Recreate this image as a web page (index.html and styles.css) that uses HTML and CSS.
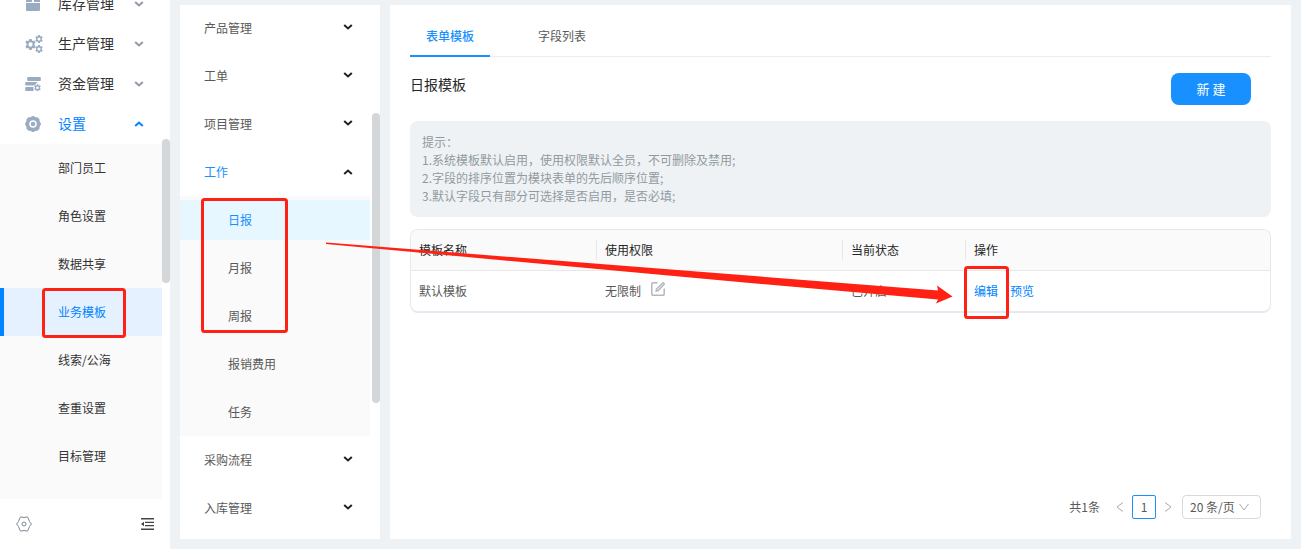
FILE: index.html
```html
<!DOCTYPE html>
<html lang="zh-CN">
<head>
<meta charset="utf-8">
<title>业务模板</title>
<link rel="stylesheet" href="styles.css">
</head>
<body>
<svg class="defs" width="0" height="0" aria-hidden="true">
  <symbol id="chev" viewBox="0 0 10 6"><path d="M1.200 1 L5 4.500 L8.800 1" fill="none" stroke="currentColor" stroke-width="2"/></symbol>
  <symbol id="gear" viewBox="0 0 16 16"><path fill="currentColor" fill-rule="evenodd" d="M6.3 0h3.4l.5 2.2 1.3.8 2.2-.7 1.7 2.9-1.7 1.6v2.4l1.7 1.6-1.7 2.9-2.2-.7-1.3.8-.5 2.2H6.3l-.5-2.2-1.3-.8-2.2.7-1.7-2.9 1.7-1.6V6.8L.6 5.200l1.700-2.900 2.200.7 1.300-.8zM8 4.900a3.100 3.100 0 1 0 0 6.200 3.100 3.100 0 0 0 0-6.200z"/></symbol>
</svg>
<div class="app">
  <aside class="sidebar">
    <nav class="side-nav">
      <button class="side-item">
        <svg class="side-icon" viewBox="0 0 16 16"><path fill="currentColor" d="M1 2h6v4H1zM9 2h6v4H9zM1 7h14v7a1 1 0 0 1-1 1H2a1 1 0 0 1-1-1z"/></svg>
        <span>库存管理</span><svg class="chev"><use href="#chev"/></svg>
      </button>
      <button class="side-item">
        <svg class="side-icon wide" viewBox="0 0 18 18"><use href="#gear" x="0" y="4" width="11" height="11"/><use href="#gear" x="10" y="0" width="8" height="8"/><use href="#gear" x="10" y="10" width="8" height="8"/></svg>
        <span>生产管理</span><svg class="chev"><use href="#chev"/></svg>
      </button>
      <button class="side-item">
        <svg class="side-icon" viewBox="0 0 16 16"><path fill="currentColor" d="M3 1h12a.8.8 0 0 1 .8.8v2.400a.8.8 0 0 1-.8.8H3a.8.8 0 0 1-.8-.8V1.800A.8.8 0 0 1 3 1zM1 6h11.500L9.500 9.500H1a.8.8 0 0 1-.8-.8V6.800A.8.8 0 0 1 1 6zM1 11h7.500v4H1a.8.8 0 0 1-.8-.8v-2.400A.8.8 0 0 1 1 11z"/><use href="#gear" x="9" y="8" width="7" height="7.500"/></svg>
        <span>资金管理</span><svg class="chev"><use href="#chev"/></svg>
      </button>
      <button class="side-item open">
        <svg class="side-icon" viewBox="0 0 16 16"><path fill="currentColor" stroke="currentColor" stroke-width="1.600" stroke-linejoin="round" d="M6 1.800 8 .8l2 1 2.200.3 1.500 1.500.2 2L15.200 8l-1.300 2.400-.2 2-1.500 1.500-2.200.3-2 1-2-1-2.200-.3-1.500-1.500-.2-2L.8 8l1.300-2.400.2-2 1.500-1.500z"/><circle cx="8" cy="8" r="3" fill="none" stroke="#fff" stroke-width="1.500"/></svg>
        <span>设置</span><svg class="chev up"><use href="#chev"/></svg>
      </button>
      <div class="side-sub">
        <a href="#">部门员工</a>
        <a href="#">角色设置</a>
        <a href="#">数据共享</a>
        <a href="#" class="active">业务模板</a>
        <a href="#">线索/公海</a>
        <a href="#">查重设置</a>
        <a href="#">目标管理</a>
      </div>
    </nav>
    <div class="side-foot">
      <button class="icon-btn" aria-label="系统设置"><svg width="16" height="16" viewBox="0 0 16 16" fill="none" stroke="#7d8a96"><path d="M4.600.8 Q8 2.200 11.400.8 L12.600 3 Q12.800 5.500 15.500 8 Q12.800 10.500 12.600 13 L11.400 15.200 Q8 13.800 4.600 15.200 L3.400 13 Q3.200 10.500.5 8 Q3.200 5.500 3.400 3 Z" stroke-linejoin="round"/><circle cx="8" cy="8" r="2"/></svg></button>
      <button class="icon-btn" aria-label="收起菜单"><svg width="14" height="12" viewBox="0 0 14 12"><path d="M1 0h13v1.500H1zM5 3.700h9V5H5zM5 7h9v1.300H5zM1 10.500h13V12H1zM4 3.800v4.400L1 6z" fill="#444"/></svg></button>
    </div>
    <div class="thumb side-thumb"></div>
  </aside>

  <section class="modules">
    <nav class="mod-nav">
      <button class="mod-item"><span>产品管理</span><svg class="chev"><use href="#chev"/></svg></button>
      <button class="mod-item"><span>工单</span><svg class="chev"><use href="#chev"/></svg></button>
      <button class="mod-item"><span>项目管理</span><svg class="chev"><use href="#chev"/></svg></button>
      <button class="mod-item open"><span>工作</span><svg class="chev up"><use href="#chev"/></svg></button>
      <div class="mod-sub">
        <a href="#" class="active">日报</a>
        <a href="#">月报</a>
        <a href="#">周报</a>
        <a href="#">报销费用</a>
        <a href="#">任务</a>
      </div>
      <button class="mod-item"><span>采购流程</span><svg class="chev"><use href="#chev"/></svg></button>
      <button class="mod-item"><span>入库管理</span><svg class="chev"><use href="#chev"/></svg></button>
    </nav>
    <div class="thumb mod-thumb"></div>
  </section>

  <main class="content">
    <div class="tabs" role="tablist">
      <button class="tab active" role="tab" aria-selected="true">表单模板</button>
      <button class="tab" role="tab" aria-selected="false">字段列表</button>
    </div>
    <header class="head">
      <h1>日报模板</h1>
      <button class="primary">新 建</button>
    </header>
    <div class="note">
      <p>提示：</p>
      <p>1.系统模板默认启用，使用权限默认全员，不可删除及禁用;</p>
      <p>2.字段的排序位置为模块表单的先后顺序位置;</p>
      <p>3.默认字段只有部分可选择是否启用，是否必填;</p>
    </div>
    <div class="table-box">
      <table>
        <colgroup><col class="c-name"><col class="c-scope"><col class="c-state"><col></colgroup>
        <thead><tr><th>模板名称</th><th>使用权限</th><th>当前状态</th><th>操作</th></tr></thead>
        <tbody><tr>
          <td>默认模板</td>
          <td><div class="scope">无限制<button class="icon-btn" aria-label="修改权限"><svg width="14" height="14" viewBox="0 0 14 14" fill="none" stroke="#b3b8bf" stroke-width="1.500"><path d="M6.500.8H2a1.200 1.200 0 0 0-1.200 1.200v10A1.200 1.200 0 0 0 2 13.200h10a1.200 1.200 0 0 0 1.200-1.200V6.500M5.200 9l.3-2L12 .8l1.300 1.300L7.200 8.500z"/></svg></button></div></td>
          <td>已开启</td>
          <td><div class="ops"><a href="#">编辑</a><a href="#">预览</a></div></td>
        </tr></tbody>
      </table>
    </div>
    <footer class="pager">
      <span class="total">共1条</span>
      <button class="step" aria-label="上一页"><svg width="8" height="10" viewBox="0 0 8 10"><path d="M7 .5 1 5l6 4.500"/></svg></button>
      <button class="page" aria-current="page">1</button>
      <button class="step" aria-label="下一页"><svg width="8" height="10" viewBox="0 0 8 10"><path d="M1 .5 7 5l-6 4.500"/></svg></button>
      <div class="size">
        <select aria-label="每页条数"><option>20 条/页</option></select>
        <svg width="10" height="8" viewBox="0 0 10 8"><path d="M.5 1 5 7l4.500-6"/></svg>
      </div>
    </footer>
  </main>

  <svg class="marks" width="1301" height="549" viewBox="0 0 1301 549" aria-hidden="true">
    <g fill="none" stroke="#ff2113" stroke-width="3">
      <rect x="43.500" y="289.500" width="81" height="47" rx="2"/>
      <rect x="202.500" y="199.500" width="84" height="132" rx="2"/>
      <rect x="965.500" y="267.500" width="42" height="50" rx="2"/>
    </g>
    <path fill="#ff2113" d="M326 242.500 L938 290.500 L937 285.500 L952.500 296.500 L936 303.500 L938 299.500 L750 283 L326 244 Z"/>
  </svg>
</div>
</body>
</html>
```
FILE: styles.css
```css
* { box-sizing: border-box; }
body, p, h1 { margin: 0; }
body {
  background: #eef2f5;
  color: #595959;
  font: 12px/18px "Noto Sans CJK SC", sans-serif;
}
button, select { font: inherit; color: inherit; }
button { border: 0; padding: 0; background: none; cursor: pointer; }
a { color: inherit; text-decoration: none; }
svg { display: block; }
.defs { position: absolute; }

.app { position: relative; display: flex; height: 100vh; overflow: hidden; }
.chev { width: 10px; height: 6px; }
.chev.up { transform: rotate(180deg); }
.thumb { position: absolute; right: 0; width: 8px; border-radius: 4px; background: #d3d7da; }

/* Primary navigation */
.sidebar {
  position: relative;
  display: flex;
  flex-direction: column;
  flex: none;
  width: 170px;
  background: #fff;
}
.side-nav { flex: 1; display: flex; flex-direction: column; overflow: hidden; justify-content: flex-end; }
.side-item {
  display: flex;
  align-items: center;
  flex: none;
  height: 40px;
  padding: 0 26px 0 25px;
  color: #333;
  font-size: 14px;
  text-align: left;
}
.side-item span { flex: 1; padding: 0 0 2px 17px; }
.side-icon { width: 16px; height: 16px; color: #9aacc1; }
.side-icon.wide { width: 18px; height: 18px; margin-right: -2px; }
.side-item .chev { color: #919ba4; }
.side-item.open span, .side-item.open .chev { color: #0084ff; }
.side-sub { flex: none; width: 162px; padding-bottom: 19px; background: #fafafa; color: #333; }
.side-sub a { display: block; padding-left: 58px; line-height: 48px; }
.side-sub .active { padding-left: 54px; border-left: 4px solid #0084ff; background: #e6f1ff; color: #0084ff; }
.side-foot { display: flex; align-items: center; justify-content: space-between; height: 50px; padding: 0 16px; }
.side-thumb { top: 139px; height: 144px; }

/* Module list */
.modules {
  position: relative;
  flex: none;
  width: 200px;
  margin: 5px 10px 10px;
  background: #fff;
  overflow: hidden;
}
.mod-nav { display: flex; flex-direction: column; margin-top: -1px; }
.mod-item { display: flex; align-items: center; justify-content: space-between; height: 48px; padding: 0 27px 0 24px; }
.mod-item .chev { color: #222; margin-bottom: 3px; }
.mod-item.open .chev { margin-bottom: 0; }
.mod-item.open span { color: #1890ff; }
.mod-sub { display: flex; flex-direction: column; gap: 8px; width: 190px; padding: 4px 0; background: #fafafa; }
.mod-sub a { padding-left: 48px; line-height: 40px; }
.mod-sub .active { background: #e6f7ff; color: #1890ff; }
.mod-thumb { top: 108px; height: 290px; }

/* Content */
.content {
  display: flex;
  flex-direction: column;
  flex: 1;
  margin: 5px 10px 10px 0;
  padding: 0 20px 20px;
  background: #fff;
}
.tabs { display: flex; gap: 32px; padding-top: 12px; border-bottom: 1px solid #eaecee; }
.tab { height: 40px; margin-bottom: -1px; padding: 0 16px; border-bottom: 2px solid transparent; }
.tab.active { border-color: #1890ff; color: #1890ff; font-weight: 500; }
.head { display: flex; align-items: center; justify-content: space-between; padding: 16px 20px 16px 0; }
h1 { padding-bottom: 10px; color: #262626; font-size: 14px; font-weight: 400; }
.primary { width: 80px; height: 32px; border-radius: 8px; background: #1890ff; color: #fff; font-size: 13px; }
.note { padding: 12px; border-radius: 8px; background: #eef2f5; color: #929a9f; }
.table-box { margin-top: 12px; border: 1px solid #e8e8e8; border-bottom: 2px solid #e6e9ef; border-radius: 8px; overflow: hidden; }
table { width: 100%; border-collapse: collapse; table-layout: fixed; }
.c-name { width: 186px; }
.c-scope { width: 246px; }
.c-state { width: 123px; }
th { height: 40px; padding: 0 8px; border-bottom: 1px solid #e8e8e8; background: #fafafa linear-gradient(#e8e8e8, #e8e8e8) no-repeat right center / 1px 20px; color: #262626; font-weight: 400; text-align: left; }
th:last-child { background: #fafafa; }
td { height: 41px; padding: 0 8px; }
.scope { display: flex; align-items: center; gap: 10px; }
.scope .icon-btn { padding-bottom: 4px; }
.ops { display: flex; gap: 12px; color: #0084ff; }
.pager { display: flex; align-items: center; justify-content: flex-end; margin-top: auto; padding-right: 10px; }
.pager path { fill: none; stroke: #a8a8a8; }
.total { margin-right: 8px; }
.step { display: flex; align-items: center; justify-content: center; width: 24px; height: 24px; }
.page { width: 24px; height: 24px; border: 1px solid #1890ff; border-radius: 2px; }
.size { position: relative; margin-left: 2px; }
.size select { appearance: none; width: 79px; height: 24px; padding: 0 7px; border: 1px solid #d9d9d9; border-radius: 4px; background: #fff; }
.size svg { position: absolute; right: 12px; top: 8px; pointer-events: none; }

/* Guide marks over the page */
.marks { position: absolute; left: 0; top: 0; pointer-events: none; }
```
